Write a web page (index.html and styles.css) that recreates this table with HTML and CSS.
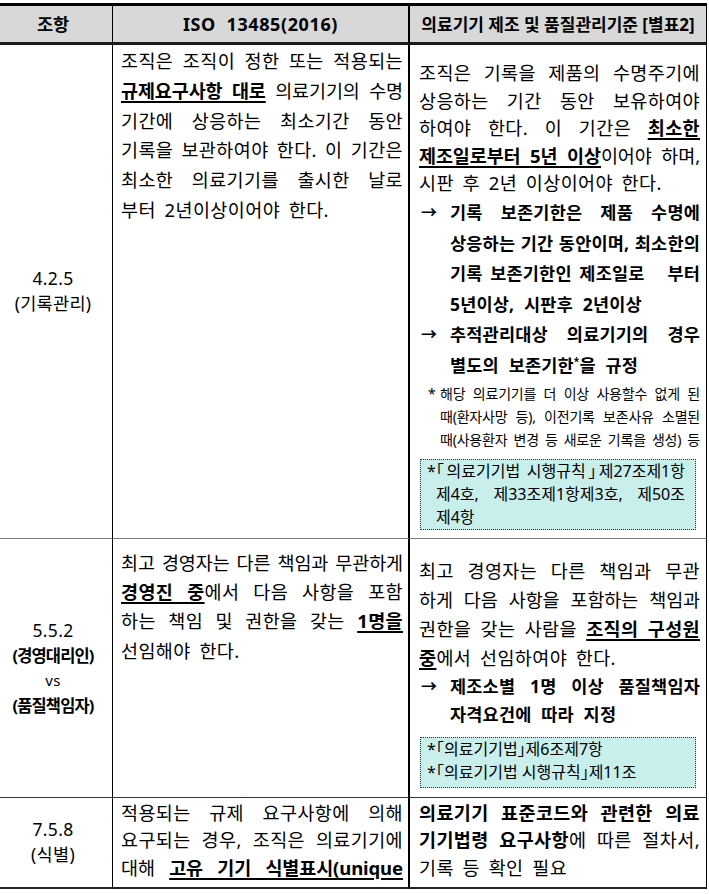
FILE: index.html
```html
<!DOCTYPE html>
<html lang="ko">
<head>
<meta charset="utf-8">
<title>ISO 13485 vs 의료기기 제조 및 품질관리기준</title>
<link rel="stylesheet" href="styles.css">
</head>
<body>
<div class="table">
  <div class="cell c1 hd">조항</div>
  <div class="cell c2 hd hd-iso">ISO&nbsp; 13485(2016)</div>
  <div class="cell c3 hd hd-wide">의료기기 제조 및 품질관리기준 [별표2]</div>

  <!-- Row 1 -->
  <div class="cell c1 key r1"><span>4.2.5</span><span>(기록관리)</span></div>
  <div class="cell c2 txt r1 mid1">
    <span class="ln">조직은 조직이 정한 또는 적용되는</span>
    <span class="ln tight"><b class="ul">규제요구사항 대로</b> 의료기기의 수명</span>
    <span class="ln">기간에 상응하는 최소기간 동안</span>
    <span class="ln">기록을 보관하여야 한다. 이 기간은</span>
    <span class="ln">최소한 의료기기를 출시한 날로</span>
    <span class="ln end">부터 2년이상이어야 한다.</span>
  </div>
  <div class="cell c3 txt r1 right1">
    <span class="ln">조직은 기록을 제품의 수명주기에</span>
    <span class="ln">상응하는 기간 동안 보유하여야</span>
    <span class="ln">하여야 한다. 이 기간은 <b class="ul">최소한</b></span>
    <span class="ln tight"><b class="ul">제조일로부터 5년 이상</b>이어야 하며,</span>
    <span class="ln end">시판 후 2년 이상이어야 한다.</span>
    <div class="arrow">
      <span class="mk">→</span>
      <div>
        <span class="ln">기록 보존기한은 제품 수명에</span>
        <span class="ln">상응하는 기간 동안이며, 최소한의</span>
        <span class="ln">기록 보존기한인 제조일로&nbsp;&nbsp; 부터</span>
        <span class="ln end">5년이상, 시판후 2년이상</span>
      </div>
    </div>
    <div class="arrow">
      <span class="mk">→</span>
      <div>
        <span class="ln">추적관리대상 의료기기의 경우</span>
        <span class="ln end">별도의 보존기한<sup class="sup">*</sup>을 규정</span>
      </div>
    </div>
    <div class="note">
      <span class="mk">*</span>
      <div>
        <span class="ln">해당 의료기기를 더 이상 사용할수 없게 된</span>
        <span class="ln">때(환자사망 등), 이전기록 보존사유 소멸된</span>
        <span class="ln">때(사용환자 변경 등 새로운 기록을 생성) 등</span>
      </div>
    </div>
    <div class="box box1">
      <div class="bi">
        <span class="mk">*</span>
        <div>
          <span class="ln">「의료기기법 시행규칙」제27조제1항</span>
          <span class="ln">제4호, 제33조제1항제3호, 제50조</span>
          <span class="ln end">제4항</span>
        </div>
      </div>
    </div>
  </div>

  <!-- Row 2 -->
  <div class="cell c1 key r2">
    <span>5.5.2</span>
    <b class="kb">(경영대리인)</b>
    <span class="vs">vs</span>
    <b class="kb">(품질책임자)</b>
  </div>
  <div class="cell c2 txt r2 mid2">
    <span class="ln tight">최고 경영자는 다른 책임과 무관하게</span>
    <span class="ln"><b class="ul">경영진 중</b>에서 다음 사항을 포함</span>
    <span class="ln">하는 책임 및 권한을 갖는 <b class="ul">1명을</b></span>
    <span class="ln end">선임해야 한다.</span>
  </div>
  <div class="cell c3 txt r2 right2">
    <span class="ln">최고 경영자는 다른 책임과 무관</span>
    <span class="ln tight">하게 다음 사항을 포함하는 책임과</span>
    <span class="ln">권한을 갖는 사람을 <b class="ul">조직의 구성원</b></span>
    <span class="ln end"><b class="ul">중</b>에서 선임하여야 한다.</span>
    <div class="arrow arrow2">
      <span class="mk">→</span>
      <div>
        <span class="ln">제조소별 1명 이상 품질책임자</span>
        <span class="ln end">자격요건에 따라 지정</span>
      </div>
    </div>
    <div class="box box2">
      <div class="bi"><span class="mk">*</span><span class="ln end">「의료기기법」제6조제7항</span></div>
      <div class="bi"><span class="mk">*</span><span class="ln end">「의료기기법 시행규칙」제11조</span></div>
    </div>
  </div>

  <!-- Row 3 -->
  <div class="cell c1 key r3"><span>7.5.8</span><span>(식별)</span></div>
  <div class="cell c2 txt r3 mid3">
    <span class="ln">적용되는 규제 요구사항에 의해</span>
    <span class="ln">요구되는 경우, 조직은 의료기기에</span>
    <span class="ln tight">대해 <b class="ul">고유 기기 식별표시(unique</b></span>
  </div>
  <div class="cell c3 txt r3 right3">
    <span class="ln"><b>의료기기 표준코드와 관련한 의료</b></span>
    <span class="ln"><b>기기법령 요구사항</b>에 따른 절차서,</span>
    <span class="ln end">기록 등 확인 필요</span>
  </div>
</div>
</body>
</html>
```

FILE: styles.css
```css
* { box-sizing: border-box; margin: 0; padding: 0; }
html, body { background: #fff; }
body {
  font-family: "Noto Sans", "Noto Sans CJK KR", sans-serif;
  color: #000;
  padding-top: 3px;
}

.table {
  display: grid;
  grid-template-columns: 113px 297px 297px;
  width: 707px;
  border-top: 3px solid #000;
}

.cell { border-bottom: 1px solid #7d7d7d; }
.c1 { border-right: 1px solid #000; }
.c2 { border-right: 2px solid #000; }
.c3 { border-right: 1px solid #000; }

.hd {
  background: #d8d8d8;
  height: 39px;
  border-bottom: 3px solid #1a1a1a;
  display: flex;
  align-items: center;
  justify-content: center;
  font-weight: 700;
  font-size: 17.5px;
  padding-bottom: 1px;
}
.c1.hd { padding-right: 6px; }
.hd-iso { font-size: 18px; letter-spacing: 0.6px; }
.hd-wide { font-size: 17px; }

.key {
  display: flex;
  flex-direction: column;
  align-items: center;
  justify-content: center;
  padding-right: 6px;
  font-size: 17.5px;
  line-height: 25px;
  letter-spacing: 0.3px;
}
.kb { font-weight: 700; font-size: 16.5px; letter-spacing: -0.9px; }
.vs { font-size: 15px; }

.txt {
  font-size: 18.5px;
  line-height: 28.5px;
  letter-spacing: 0.4px;
  word-break: keep-all;
}
.c2.txt { padding: 1px 5px 0 8px; line-height: 29.8px; }
.c3.txt { padding: 14px 6px 8px 9px; line-height: 27.6px; }

.ln {
  display: block;
  text-align: justify;
  text-align-last: justify;
}
.ln.tight { letter-spacing: -0.1px; }
.ln.end { text-align-last: left; word-spacing: 3.5px; }

.ul {
  text-decoration: underline;
  text-decoration-thickness: 1.6px;
  text-underline-offset: 3px;
}

.arrow {
  display: grid;
  grid-template-columns: 31px 1fr;
  font-weight: 700;
  font-size: 17.5px;
  line-height: 30.6px;
  letter-spacing: 0.2px;
}
.arrow .mk { padding-left: 2px; font-size: 16px; }
.arrow .ln.end { word-spacing: 5px; }
.sup { font-size: 10px; vertical-align: 7px; line-height: 0; }

.note {
  display: grid;
  grid-template-columns: 12px 1fr;
  margin-top: 1px;
  padding-left: 9px;
  font-size: 14px;
  line-height: 23px;
  letter-spacing: -0.2px;
}

.box {
  margin: 8px 4px 0 1px;
  border: 1px dotted #333;
  background: #c9efed;
  font-size: 16px;
  line-height: 23px;
  padding: 0 10px 0 6px;
  letter-spacing: 0;
  font-feature-settings: "halt";
}
.box .ln.end { word-spacing: 0; }
.bi {
  display: grid;
  grid-template-columns: 9px 1fr;
}

.r2.c2.txt { padding-top: 9px; line-height: 29.4px; }
.r2.c3.txt { padding-top: 17px; padding-bottom: 9px; line-height: 29px; }
.arrow2 { line-height: 28.5px; }
.box2 { margin-top: 8px; line-height: 23.5px; padding-bottom: 2px; }

.r3 { border-bottom: 2px solid #222; }
.r2 { border-bottom-color: #333; }
.r3.c2.txt, .r3.c3.txt { padding-top: 1px; padding-bottom: 6px; line-height: 27.5px; }
```
